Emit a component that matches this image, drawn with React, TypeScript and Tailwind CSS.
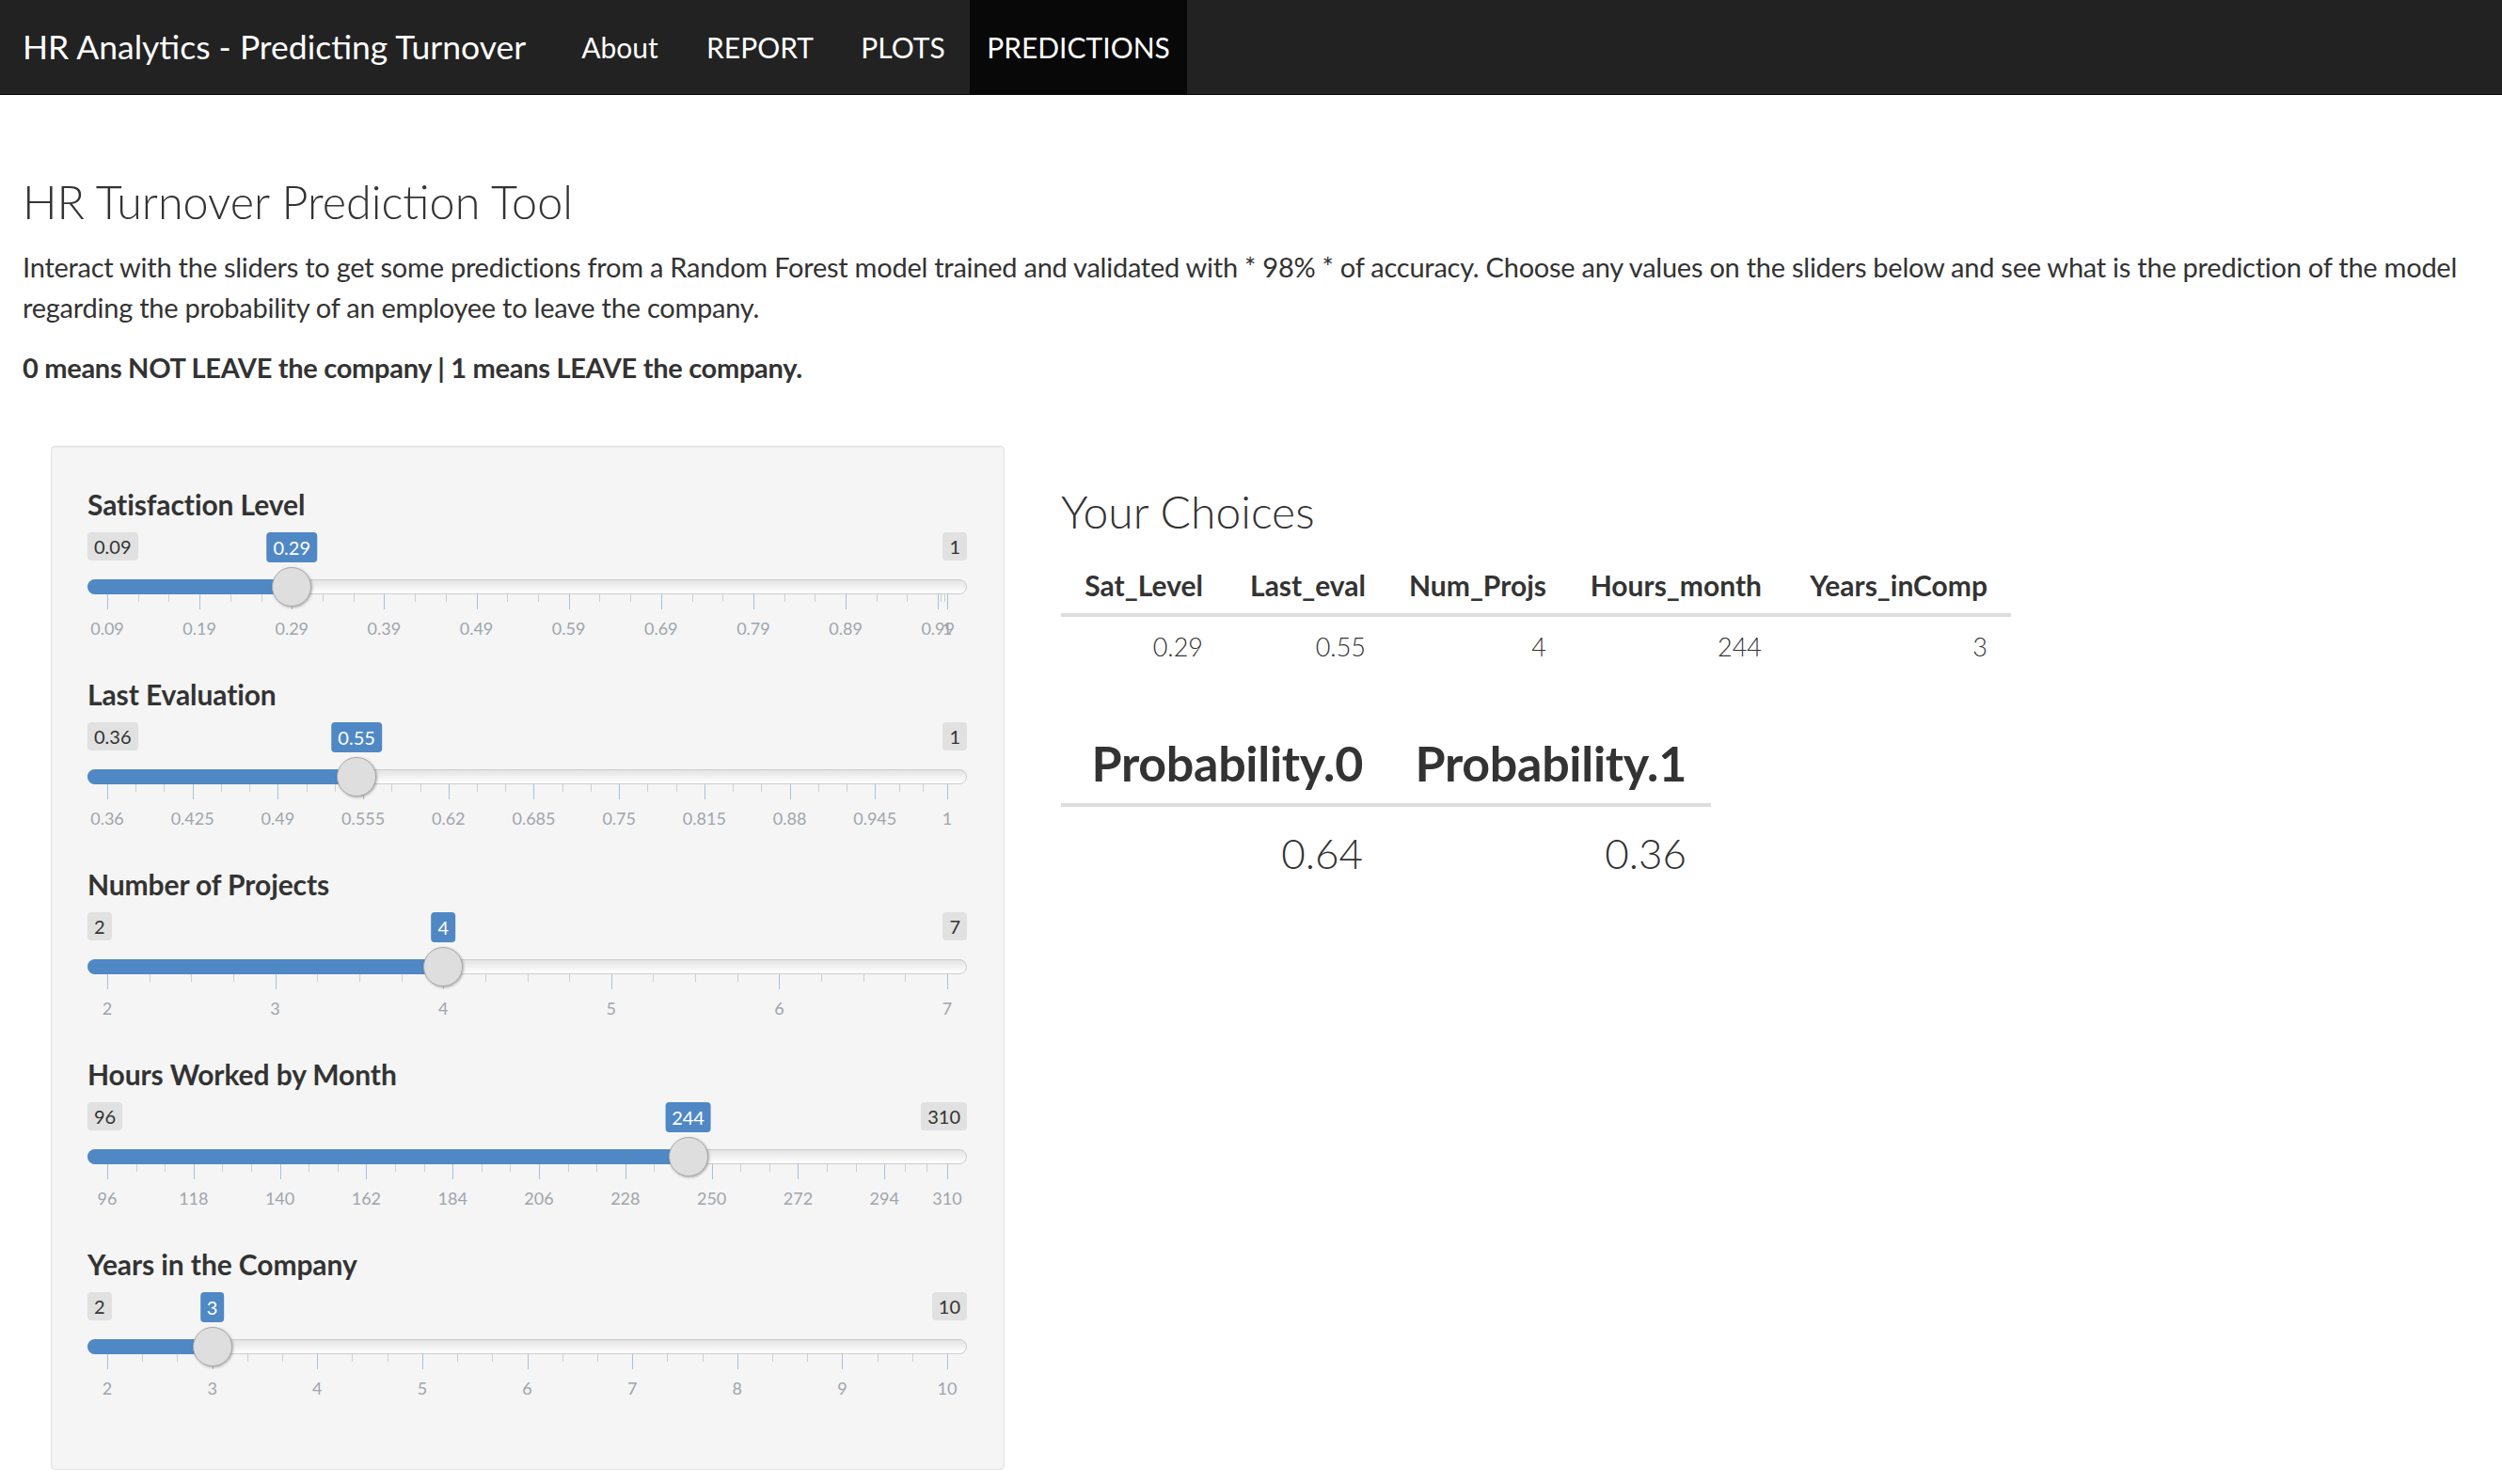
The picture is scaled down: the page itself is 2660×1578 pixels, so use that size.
import React from "react";

type SliderDef = {
  label: string;
  min: number;
  max: number;
  value: number;
  valueText: string;
  minText: string;
  maxText: string;
  majors: { v: number; t: string }[];
  minors: number;
};

const mk = (start: number, step: number, count: number, digits: number) =>
  Array.from({ length: count }, (_, i) => {
    const v = start + step * i;
    return { v, t: digits === 0 ? String(Math.round(v)) : String(parseFloat(v.toFixed(digits))) };
  });

const sliders: SliderDef[] = [
  {
    label: "Satisfaction Level",
    min: 0.09,
    max: 1,
    value: 0.29,
    valueText: "0.29",
    minText: "0.09",
    maxText: "1",
    majors: [...mk(0.09, 0.1, 10, 2), { v: 1, t: "1" }],
    minors: 2,
  },
  {
    label: "Last Evaluation",
    min: 0.36,
    max: 1,
    value: 0.55,
    valueText: "0.55",
    minText: "0.36",
    maxText: "1",
    majors: [...mk(0.36, 0.065, 10, 3), { v: 1, t: "1" }],
    minors: 2,
  },
  {
    label: "Number of Projects",
    min: 2,
    max: 7,
    value: 4,
    valueText: "4",
    minText: "2",
    maxText: "7",
    majors: mk(2, 1, 6, 0),
    minors: 3,
  },
  {
    label: "Hours Worked by Month",
    min: 96,
    max: 310,
    value: 244,
    valueText: "244",
    minText: "96",
    maxText: "310",
    majors: [...mk(96, 22, 10, 0), { v: 310, t: "310" }],
    minors: 2,
  },
  {
    label: "Years in the Company",
    min: 2,
    max: 10,
    value: 3,
    valueText: "3",
    minText: "2",
    maxText: "10",
    majors: mk(2, 1, 9, 0),
    minors: 2,
  },
];

const TRACK_W = 935;
const PAD = 21;
const INNER = TRACK_W - PAD * 2;

function Slider({ s }: { s: SliderDef }) {
  const pos = (v: number) => PAD + ((v - s.min) / (s.max - s.min)) * INNER;
  const hx = pos(s.value);
  const minorXs: number[] = [];
  for (let i = 1; i < s.majors.length; i++) {
    const a = pos(s.majors[i - 1].v);
    const b = pos(s.majors[i].v);
    for (let k = 1; k <= s.minors; k++) minorXs.push(a + ((b - a) * k) / (s.minors + 1));
  }
  return (
    <div className="h-[202px]">
      <div className="text-[30px] leading-[40px] font-bold tracking-[-0.1px] text-[#333]">{s.label}</div>
      <div className="relative mt-[10px] h-[152px] w-[935px]">
        <div className="absolute left-0 top-0 h-[30px] px-[7px] rounded-[4px] bg-[#e1e1e1] text-[20px] leading-[30px] text-[#333]">
          {s.minText}
        </div>
        <div className="absolute right-0 top-0 h-[30px] px-[7px] rounded-[4px] bg-[#e1e1e1] text-[20px] leading-[30px] text-[#333]">
          {s.maxText}
        </div>
        <div
          className="absolute top-0 h-[32px] px-[7px] -translate-x-1/2 rounded-[4px] bg-[#5088c5] text-[20px] leading-[32px] text-white"
          style={{ left: hx }}
        >
          {s.valueText}
        </div>
        <div className="absolute left-0 top-[50px] h-[16px] w-[935px] rounded-full border border-[#cccccc] bg-gradient-to-b from-[#e4e4e4] to-[#ffffff]" />
        <div
          className="absolute left-0 top-[50px] h-[16px] rounded-l-full bg-[#5088c5]"
          style={{ width: hx }}
        />
        {s.majors.map((m, i) => (
          <React.Fragment key={"M" + i}>
            <div className="absolute top-[66px] h-[16px] w-px bg-[#a6c1df]" style={{ left: m.v === s.max ? TRACK_W - PAD : pos(m.v) }} />
            <div
              className="absolute top-[90px] -translate-x-1/2 text-[18px] leading-[24px] text-[#9ea5ad]"
              style={{ left: pos(m.v) }}
            >
              {m.t}
            </div>
          </React.Fragment>
        ))}
        {minorXs.map((x, i) => (
          <div key={"m" + i} className="absolute top-[66px] h-[8px] w-px bg-[#cfcfcf]" style={{ left: x }} />
        ))}
        <div
          className="absolute top-[37px] h-[42px] w-[42px] -translate-x-1/2 rounded-full border border-[#aaaaaa] bg-[#dedede] shadow-[1px_1px_3px_rgba(0,0,0,0.3)]"
          style={{ left: hx }}
        />
      </div>
    </div>
  );
}

const navItems = [
  { t: "About", w: "w-[136px]", active: false },
  { t: "REPORT", w: "w-[162px]", active: false },
  { t: "PLOTS", w: "w-[142px]", active: false },
  { t: "PREDICTIONS", w: "w-[231px]", active: true },
];

const choiceCols = [
  { h: "Sat_Level", v: "0.29", w: "w-[176px]" },
  { h: "Last_eval", v: "0.55", w: "w-[173px]" },
  { h: "Num_Projs", v: "4", w: "w-[192px]" },
  { h: "Hours_month", v: "244", w: "w-[229px]" },
  { h: "Years_inComp", v: "3", w: "w-[240px]" },
];

const probCols = [
  { h: "Probability.0", v: "0.64", w: "w-[347px]" },
  { h: "Probability.1", v: "0.36", w: "w-[344px]" },
];

export default function App() {
  return (
    <div className="min-h-[1578px] bg-white text-[#333] font-[family-name:Lato,sans-serif]">
      <nav className="flex h-[101px] border-b border-[#080808] bg-[#222222]">
        <div className="flex w-[591px] items-center pl-[24px] text-[35.5px] text-white">
          HR Analytics - Predicting Turnover
        </div>
        {navItems.map((n) => (
          <div
            key={n.t}
            className={
              "flex items-center justify-center text-[30px] text-white " +
              n.w +
              (n.active ? " bg-[#080808]" : "")
            }
          >
            {n.t}
          </div>
        ))}
      </nav>
      <main className="px-[24px]">
        <h3 className="mt-[83px] text-[48.5px] leading-[60px] font-light text-[#333]">HR Turnover Prediction Tool</h3>
        <p className="mt-[18px] text-[29px] leading-[43px] tracking-[-0.25px]">
          Interact with the sliders to get some predictions from a Random Forest model trained and validated with * 98% * of
          accuracy. Choose any values on the sliders below and see what is the prediction of the model regarding the
          probability of an employee to leave the company.
        </p>
        <p className="mt-[21px] text-[29px] leading-[43px] font-bold tracking-[-0.3px]">
          0 means NOT LEAVE the company | 1 means LEAVE the company.
        </p>
        <div className="mt-[62px] flex items-start">
          <div className="ml-[30px] w-[1014px] rounded-[4px] border border-[#e3e3e3] bg-[#f5f5f5] px-[38px] pt-[41px] pb-[36px] shadow-[inset_0_1px_2px_rgba(0,0,0,0.05)]">
            {sliders.map((s) => (
              <Slider key={s.label} s={s} />
            ))}
          </div>
          <div className="ml-[60px] flex-1">
            <h3 className="mt-[40px] text-[48px] leading-[60px] font-light">Your Choices</h3>
            <table className="mt-[18px] table-fixed border-collapse">
              <thead>
                <tr className="h-[62px] border-b-4 border-[#dddddd]">
                  {choiceCols.map((c) => (
                    <th key={c.h} className={"pr-[25px] text-right text-[30px] font-bold " + c.w}>
                      {c.h}
                    </th>
                  ))}
                </tr>
              </thead>
              <tbody>
                <tr className="h-[66px]">
                  {choiceCols.map((c) => (
                    <td key={c.h} className="pr-[25px] text-right text-[27px] font-light">
                      {c.v}
                    </td>
                  ))}
                </tr>
              </tbody>
            </table>
            <table className="mt-[48px] table-fixed border-collapse">
              <thead>
                <tr className="h-[88px] border-b-4 border-[#dddddd]">
                  {probCols.map((c) => (
                    <th key={c.h} className={"pr-[26px] text-right text-[52px] font-bold tracking-[-0.3px] " + c.w}>
                      {c.h}
                    </th>
                  ))}
                </tr>
              </thead>
              <tbody>
                <tr className="h-[100px]">
                  {probCols.map((c) => (
                    <td key={c.h} className="pr-[26px] text-right text-[44px] font-light">
                      {c.v}
                    </td>
                  ))}
                </tr>
              </tbody>
            </table>
          </div>
        </div>
      </main>
    </div>
  );
}
